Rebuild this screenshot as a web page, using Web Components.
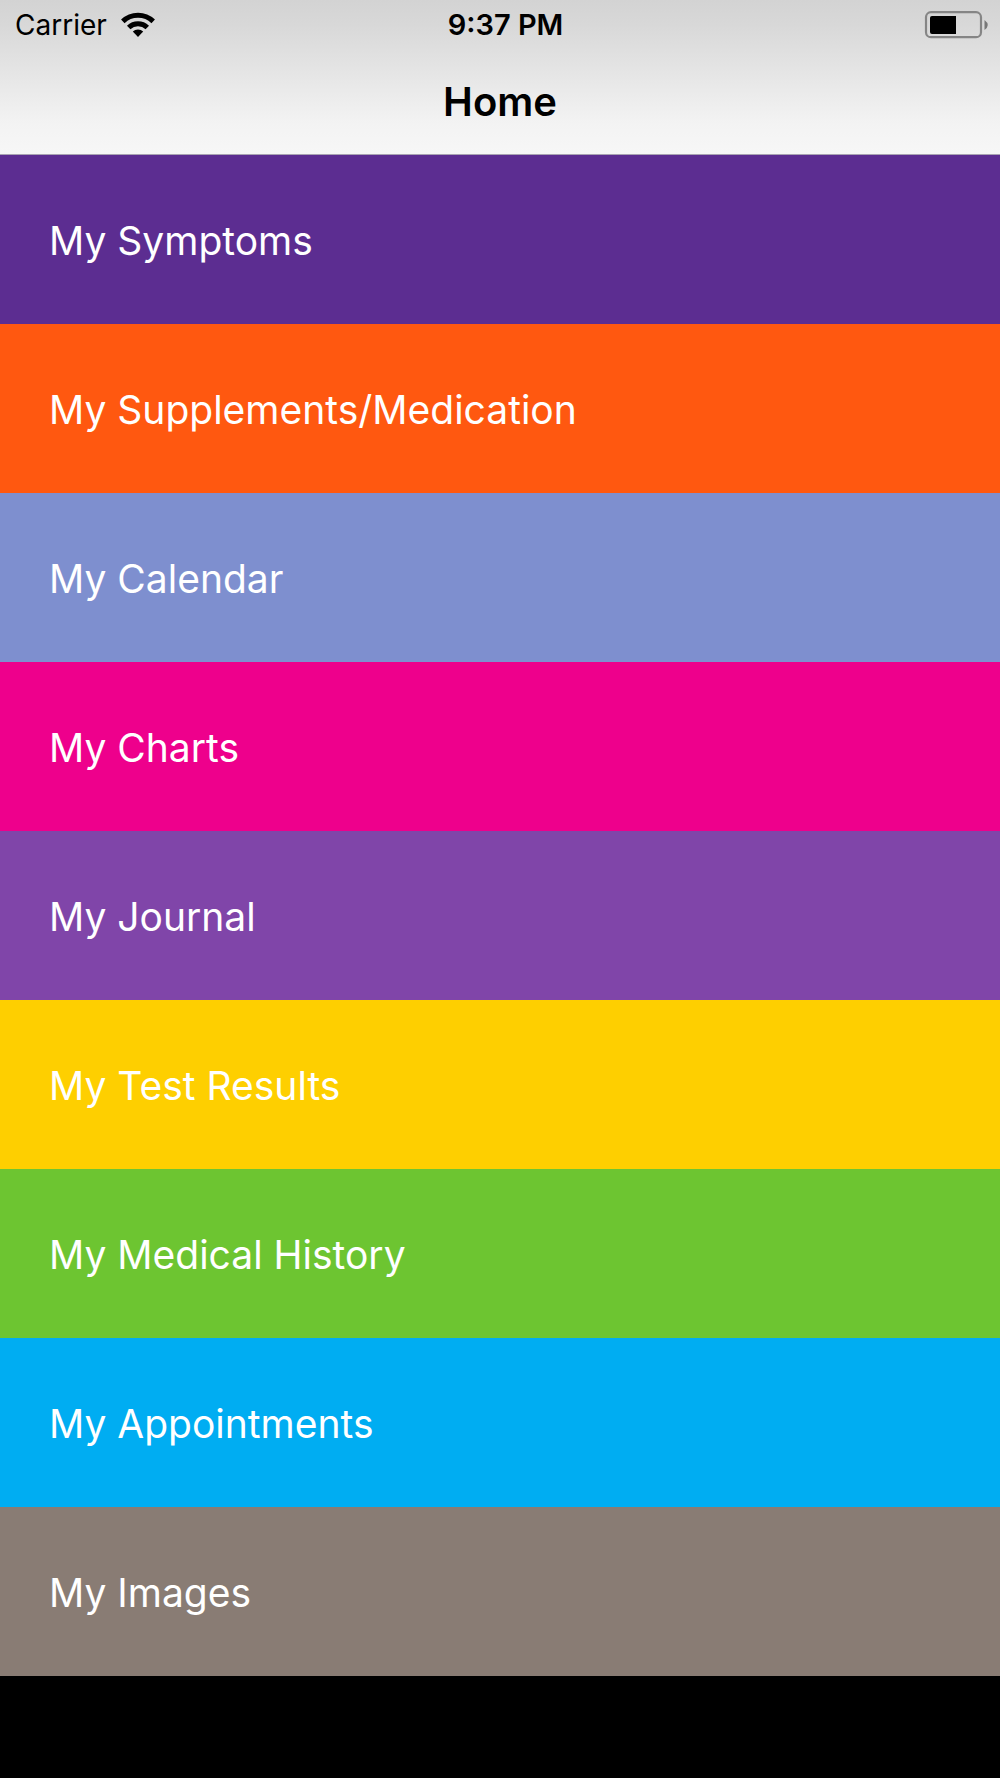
<!DOCTYPE html>
<html lang="en">
<head>
    <meta charset="UTF-8">
    <meta name="viewport" content="width=device-width, initial-scale=1.0">
    <title>Home</title>
    <style>
        body {
            margin: 0;
            background: #000;
            font-family: Inter, "Liberation Sans", sans-serif;
        }
    </style>
</head>
<body>
    <home-screen></home-screen>
    <script>
        class StatusBar extends HTMLElement {
            constructor() {
                super();
                this.attachShadow({ mode: 'open' });
                this.shadowRoot.innerHTML = `
                    <style>
                        :host {
                            display: grid;
                            grid-template-columns: 1fr auto 1fr;
                            align-items: center;
                            height: 50px;
                            padding: 0 4px 0 15px;
                            font-size: 28px;
                            line-height: 36px;
                        }
                        .carrier {
                            display: flex;
                            align-items: center;
                            gap: 14px;
                        }
                        .time {
                            font-size: 29px;
                            font-weight: 600;
                        }
                        .battery {
                            justify-self: end;
                        }
                        svg {
                            display: block;
                        }
                    </style>
                    <div class="carrier">
                        <slot name="carrier"></slot>
                        <svg width="34" height="26" viewBox="0 0 34 26" aria-hidden="true">
                            <path d="M17 25 L11.8 19.6 A7.8 7.8 0 0 1 22.2 19.6 Z"/>
                            <g fill="none" stroke="#000" stroke-width="5">
                                <path d="M7.7 15.5 A13.6 13.6 0 0 1 26.3 15.5"/>
                                <path d="M1.8 9.4 A21.8 21.8 0 0 1 32.2 9.4"/>
                            </g>
                        </svg>
                    </div>
                    <div class="time"><slot name="time"></slot></div>
                    <svg class="battery" width="72" height="28" viewBox="0 0 72 28" aria-hidden="true">
                        <rect x="2" y="1.2" width="55" height="25" rx="5" fill="none" stroke="#858585" stroke-width="2.2"/>
                        <rect x="6" y="5" width="26" height="18" rx="2"/>
                        <path d="M30 5h2v18h-2z"/>
                        <path d="M60.5 9 Q67 14 60.5 19 Z" fill="#777"/>
                    </svg>
                `;
            }
        }

        customElements.define('status-bar', StatusBar);

        class NavHeader extends HTMLElement {
            constructor() {
                super();
                this.attachShadow({ mode: 'open' });
                this.shadowRoot.innerHTML = `
                    <style>
                        :host {
                            display: block;
                            background: linear-gradient(#d3d3d3, #d8d8d8 16%, #f3f3f3 80%, #f7f7f7);
                            border-bottom: 1px solid #a9a3b3;
                        }
                        h1 {
                            margin: 0;
                            padding: 28px 0;
                            font-size: 40px;
                            font-weight: 600;
                            line-height: 48px;
                            text-align: center;
                        }
                    </style>
                    <slot name="status"></slot>
                    <h1><slot></slot></h1>
                `;
            }
        }

        customElements.define('nav-header', NavHeader);

        class MenuRow extends HTMLElement {
            constructor() {
                super();
                this.attachShadow({ mode: 'open' });
                this.shadowRoot.innerHTML = `
                    <style>
                        :host {
                            display: block;
                        }
                        a {
                            display: block;
                            padding: 62px 49px 59px;
                            background: var(--row-color);
                            color: #fff;
                            font-size: 39px;
                            line-height: 48px;
                            text-decoration: none;
                        }
                    </style>
                    <a href="#"><slot></slot></a>
                `;
            }

            connectedCallback() {
                this.style.setProperty('--row-color', this.getAttribute('color'));
            }
        }

        customElements.define('menu-row', MenuRow);

        class HomeScreen extends HTMLElement {
            constructor() {
                super();
                this.attachShadow({ mode: 'open' });
                this.shadowRoot.innerHTML = `
                    <style>
                        :host {
                            display: block;
                        }
                    </style>
                    <nav-header>
                        <status-bar slot="status">
                            <span slot="carrier">Carrier</span>
                            <span slot="time">9:37 PM</span>
                        </status-bar>
                        Home
                    </nav-header>
                    <nav>
                        <menu-row color="#5c2d91">My Symptoms</menu-row>
                        <menu-row color="#ff5810">My Supplements/Medication</menu-row>
                        <menu-row color="#7e8fcf">My Calendar</menu-row>
                        <menu-row color="#ee008c">My Charts</menu-row>
                        <menu-row color="#8045a9">My Journal</menu-row>
                        <menu-row color="#fecf00">My Test Results</menu-row>
                        <menu-row color="#6dc531">My Medical History</menu-row>
                        <menu-row color="#00adf2">My Appointments</menu-row>
                        <menu-row color="#897c74">My Images</menu-row>
                    </nav>
                `;
            }
        }

        customElements.define('home-screen', HomeScreen);
    </script>
</body>
</html>
